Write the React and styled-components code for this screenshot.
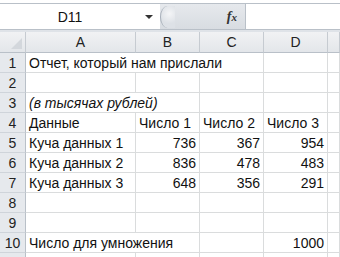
import React from 'react';
import styled, { createGlobalStyle } from 'styled-components';

const GlobalStyle = createGlobalStyle`
  html, body {
    margin: 0;
    padding: 0;
    background: #fff;
    overflow: hidden;
  }
  body {
    font-family: "Liberation Sans", Arial, sans-serif;
  }
`;

const Window = styled.div`
  width: 340px;
  height: 257px;
  overflow: hidden;
  background: #fff;
`;

const FormulaBar = styled.div`
  display: flex;
  height: 25px;
  margin-top: 3px;
  border-top: 1px solid #b9c0c8;
  border-bottom: 1px solid #b9c0c8;
  background: #dfe3e8;
`;

const NameBox = styled.div`
  position: relative;
  width: 160px;
  background: #fff;
  display: flex;
  align-items: center;
  justify-content: center;
  font-size: 14px;
  color: #111;
  padding-right: 20px;
  box-sizing: border-box;
`;

const Arrow = styled.span`
  position: absolute;
  right: 7px;
  top: 11px;
  width: 0;
  height: 0;
  border-left: 4px solid transparent;
  border-right: 4px solid transparent;
  border-top: 4px solid #333;
`;

const Splitter = styled.div`
  flex: 1;
  display: flex;
  align-items: center;
  justify-content: flex-end;
  padding-right: 8px;
  background: linear-gradient(#e6e9ed, #d8dce1);
`;

const Handle = styled.div`
  width: 14px;
  height: 22px;
  margin-right: auto;
  border-radius: 50% 0 0 50%;
  border-left: 1px solid #a7afb9;
  background: radial-gradient(circle at 60% 35%, #f4f5f7 0, #dde1e6 60%);
`;

const Fx = styled.span`
  font-family: "Liberation Serif", "Times New Roman", serif;
  font-style: italic;
  font-weight: bold;
  font-size: 14px;
  color: #333;
`;

const Input = styled.div`
  width: 94px;
  background: #fff;
  border-left: 1px solid #b9c0c8;
`;

const Gap = styled.div`
  height: 2px;
  background: #dfe3e8;
`;

const Sheet = styled.div`
  display: grid;
  grid-template-columns: 26px 110px 64px 64px 64px 1fr;
  grid-template-rows: 21px repeat(11, 20px);
  font-size: 14px;
  color: #111;
`;

const ColHead = styled.div`
  background: linear-gradient(#f1f2f4, #e3e6ea);
  border-right: 1px solid #c6cbd1;
  border-bottom: 1px solid #b9c0c8;
  display: flex;
  align-items: center;
  justify-content: center;
  color: #222;
`;

const Corner = styled(ColHead)`
  position: relative;
  &::after {
    content: '';
    position: absolute;
    right: 3px;
    bottom: 3px;
    border-left: 11px solid transparent;
    border-bottom: 11px solid #d3d7dc;
  }
`;

const RowHead = styled.div`
  background: #e6e9ed;
  border-right: 1px solid #b9c0c8;
  border-bottom: 1px solid #cfd4da;
  display: flex;
  align-items: center;
  justify-content: center;
  color: #222;
`;

const Cell = styled.div`
  border-right: 1px solid #dadcdd;
  border-bottom: 1px solid #dadcdd;
  display: flex;
  align-items: center;
  justify-content: ${p => (p.$num ? 'flex-end' : 'flex-start')};
  padding: 0 3px;
  white-space: nowrap;
  font-style: ${p => (p.$italic ? 'italic' : 'normal')};
  min-width: 0;
`;

const cols = ['A', 'B', 'C', 'D', ''];

const rows = [
  [{ t: 'Отчет, который нам прислали' }, null, null, {}, {}],
  [{}, {}, {}, {}, {}],
  [{ t: '(в тысячах рублей)', italic: true }, null, {}, {}, {}],
  [{ t: 'Данные' }, { t: 'Число 1' }, { t: 'Число 2' }, { t: 'Число 3' }, {}],
  [{ t: 'Куча данных 1' }, { t: '736', num: true }, { t: '367', num: true }, { t: '954', num: true }, {}],
  [{ t: 'Куча данных 2' }, { t: '836', num: true }, { t: '478', num: true }, { t: '483', num: true }, {}],
  [{ t: 'Куча данных 3' }, { t: '648', num: true }, { t: '356', num: true }, { t: '291', num: true }, {}],
  [{}, {}, {}, {}, {}],
  [{}, {}, {}, {}, {}],
  [{ t: 'Число для умножения' }, null, {}, { t: '1000', num: true }, {}],
  [{}, {}, {}, {}, {}],
];

// how many columns a cell covers: following nulls are merged into it
const spanOf = (row, i) => {
  let s = 1;
  while (i + s < row.length && row[i + s] === null) s++;
  return s;
};

export default function App() {
  return (
    <Window>
      <GlobalStyle />
      <FormulaBar>
        <NameBox>
          D11
          <Arrow />
        </NameBox>
        <Splitter>
          <Handle />
          <Fx>f<span style={{ fontSize: 11 }}>x</span></Fx>
        </Splitter>
        <Input />
      </FormulaBar>
      <Gap />
      <Sheet>
        <Corner />
        {cols.map((c, i) => <ColHead key={i}>{c}</ColHead>)}
        {rows.map((row, r) => (
          <React.Fragment key={r}>
            <RowHead>{r < 10 ? r + 1 : ''}</RowHead>
            {row.map((cell, i) => cell && (
              <Cell
                key={i}
                $num={cell.num}
                $italic={cell.italic}
                style={{ gridColumn: `span ${spanOf(row, i)}` }}
              >
                {cell.t}
              </Cell>
            ))}
          </React.Fragment>
        ))}
      </Sheet>
    </Window>
  );
}
